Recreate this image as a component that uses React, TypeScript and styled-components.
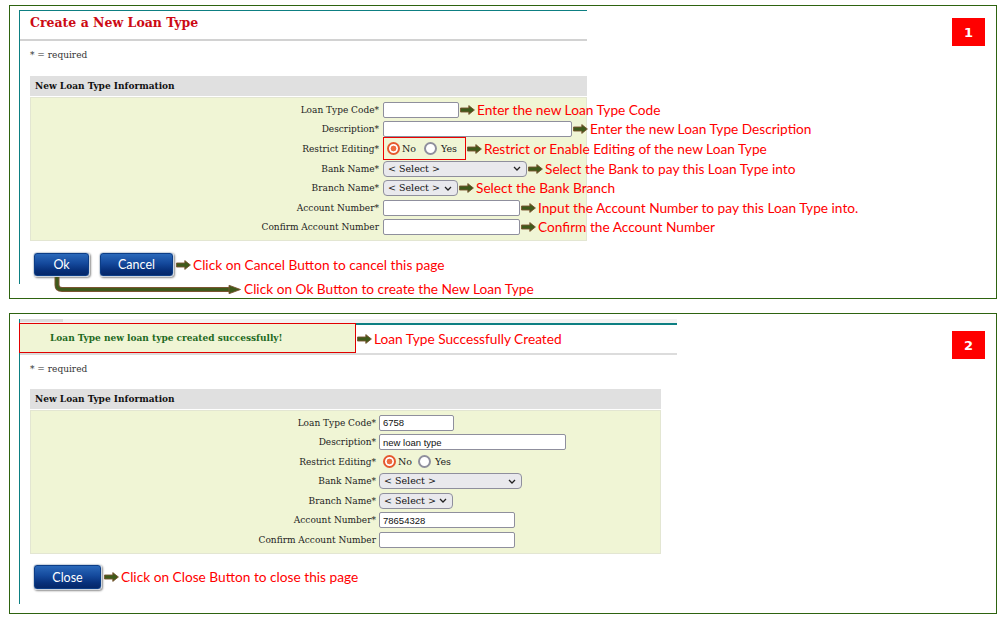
import React from "react";
import styled, { createGlobalStyle } from "styled-components";

const TEAL = "#0d7f82";
const SERIF = `"DejaVu Serif", serif`;
const NOTE_FONT = `Lato, "Open Sans", sans-serif`;

const GlobalStyle = createGlobalStyle`
  html, body { margin: 0; padding: 0; background: #ffffff; }
  body { font-family: ${SERIF}; }
  * { box-sizing: border-box; }
`;

const Page = styled.div`
  width: 1002px;
  height: 618px;
  padding-top: 5px;
  display: flex;
  flex-direction: column;
  gap: 14px;
`;

const Panel = styled.section<{ $pt: number; $pb: number; $h: number }>`
  margin-left: 9px;
  width: 988px;
  height: ${(p) => p.$h}px;
  border: 1px solid #2e6310;
  display: flex;
  justify-content: space-between;
  align-items: flex-start;
  padding: ${(p) => p.$pt}px 11px ${(p) => p.$pb}px 9px;
`;

const Badge = styled.div<{ $mt: number }>`
  margin-top: ${(p) => p.$mt}px;
  width: 33px;
  height: 28px;
  background: #ff0000;
  color: #ffffff;
  font: bold 13px "DejaVu Sans", sans-serif;
  display: flex;
  align-items: center;
  justify-content: center;
`;

const Column = styled.div<{ $w: number }>`
  width: ${(p) => p.$w}px;
  display: flex;
  flex-direction: column;
`;

const Screen = styled.div<{ $topLine: boolean; $pb: number }>`
  border-left: 1px solid ${TEAL};
  border-top: ${(p) => (p.$topLine ? `1px solid ${TEAL}` : "none")};
  padding-bottom: ${(p) => p.$pb}px;
  display: flex;
  flex-direction: column;
`;

const TitleBar = styled.div`
  height: 30px;
  border-bottom: 2px solid #d2d2d2;
  padding: 0 0 5px 10px;
  display: flex;
  align-items: center;
`;

const Title = styled.h1`
  margin: 0;
  font: bold 12.5px ${SERIF};
  color: #cc0a14;
`;

const TopBand = styled.div`
  height: 4px;
  background: #f3f3f3;
  display: flex;
`;

const Tab = styled.div`
  width: 43px;
  height: 3px;
  background: #dcdcdc;
`;

const MsgBar = styled.div`
  height: 32px;
  border-top: 2px solid ${TEAL};
  border-bottom: 2px solid #dcdcdc;
  display: flex;
  align-items: flex-start;
  white-space: nowrap;
`;

const MsgBox = styled.div`
  margin: -2px 0 0 -1px;
  width: 337px;
  height: 30px;
  border: 1px solid #e10000;
  background: #f0f5d5;
  padding-left: 30px;
  display: flex;
  align-items: center;
  font: bold 9px ${SERIF};
  color: #1f6a1f;
`;

const MsgNote = styled.div`
  height: 28px;
  display: flex;
  align-items: center;
`;

const Required = styled.div<{ $mt: number }>`
  margin-top: ${(p) => p.$mt}px;
  padding-left: 10px;
  font: 9px/12px ${SERIF};
  color: #333333;
`;

const Section = styled.div<{ $mt: number; $w: number }>`
  margin: ${(p) => p.$mt}px 0 0 10px;
  width: ${(p) => p.$w}px;
`;

const SectionHead = styled.div`
  height: 20px;
  background: #e0e0e0;
  padding-left: 5px;
  font: bold 9px/20px ${SERIF};
  color: #111111;
`;

const SectionBody = styled.div<{ $h: number }>`
  margin-top: 1px;
  height: ${(p) => p.$h}px;
  background: #f0f5d5;
  border: 1px solid #e3e6d2;
  padding-top: 2px;
  display: flex;
  flex-direction: column;
`;

const FormRow = styled.div<{ $h: number }>`
  height: ${(p) => p.$h}px;
  display: flex;
  align-items: center;
  white-space: nowrap;
`;

const Label = styled.label<{ $w: number; $gap: number }>`
  width: ${(p) => p.$w}px;
  margin-right: ${(p) => p.$gap}px;
  flex-shrink: 0;
  text-align: right;
  font: 9px ${SERIF};
  color: #222222;
`;

const TextInput = styled.input<{ $w: number }>`
  width: ${(p) => p.$w}px;
  height: 16px;
  flex-shrink: 0;
  border: 1px solid #8f8f9d;
  border-radius: 2px;
  background: #ffffff;
  padding: 0 3px;
  font: 9.5px "Liberation Sans", sans-serif;
  color: #111111;
  outline: none;
`;

const SelectBox = styled.div<{ $w: number }>`
  position: relative;
  width: ${(p) => p.$w}px;
  height: 16px;
  flex-shrink: 0;
  display: flex;
`;

const Select = styled.select`
  appearance: none;
  display: block;
  width: 100%;
  height: 16px;
  min-height: 0;
  margin: 0;
  border: 1px solid #8f8f9d;
  border-radius: 4px;
  background: #e9e9ed;
  padding: 0 0 0 4px;
  font: 9.5px/14px ${SERIF};
  color: #111111;
  outline: none;
`;

const Chevron = styled.svg`
  position: absolute;
  right: 6px;
  top: 5.5px;
  pointer-events: none;
`;

const RadioGroup = styled.div<{ $boxed: boolean }>`
  height: ${(p) => (p.$boxed ? "23px" : "16px")};
  width: ${(p) => (p.$boxed ? "83px" : "auto")};
  border: ${(p) => (p.$boxed ? "1px solid #ee0000" : "none")};
  padding-left: ${(p) => (p.$boxed ? "3px" : "4px")};
  display: flex;
  align-items: center;
  flex-shrink: 0;
`;

const Radio = styled.input`
  appearance: none;
  margin: 0;
  width: 13px;
  height: 13px;
  border-radius: 50%;
  border: 2px solid #8f8f9d;
  background: #ffffff;
  flex-shrink: 0;
  &:checked {
    border-color: #e5582f;
    background: radial-gradient(circle, #ee6b3f 0 2.6px, #ffffff 3.2px);
  }
`;

const RadioText = styled.span<{ $ml: number; $mr: number }>`
  margin-left: ${(p) => p.$ml}px;
  margin-right: ${(p) => p.$mr}px;
  font: 9.5px ${SERIF};
  color: #222222;
`;

const Note = styled.span`
  font: 13.7px/16px ${NOTE_FONT};
  color: #ff0000;
`;

const Pointer = styled.svg`
  flex-shrink: 0;
  margin: 0 2px 0 1px;
`;

const ButtonRow = styled.div<{ $mt: number }>`
  margin-top: ${(p) => p.$mt}px;
  padding-left: 13px;
  display: flex;
  align-items: center;
  gap: 9px;
  white-space: nowrap;
`;

const NoteGroup = styled.div`
  display: flex;
  align-items: center;
  margin-left: -8px;
`;

const Button = styled.button<{ $w: number; $h: number }>`
  width: ${(p) => p.$w}px;
  height: ${(p) => p.$h}px;
  border: 1px solid #cdd5df;
  border-radius: 4px;
  background: linear-gradient(to bottom, #2d6cbd 0%, #14499c 45%, #07307a 75%, #052565 100%);
  box-shadow: 1px 1px 2px rgba(0, 0, 0, 0.45), inset 0 0 0 1px #0c3d86;
  color: #ffffff;
  font: 12.5px ${NOTE_FONT};
  padding: 0;
  cursor: pointer;
`;

const HintRow = styled.div`
  margin-top: -7px;
  padding-left: 34px;
  display: flex;
  align-items: flex-start;
  white-space: nowrap;
`;

const HintText = styled(Note)`
  margin: 4px 0 0 2px;
`;

const Arrow = () => (
  <Pointer width={15} height={10} viewBox="0 0 15 10">
    <path
      d="M0.5 3 H8.8 V0.6 L14.4 5 L8.8 9.4 V7 H0.5 Z"
      fill="#3f5a1b"
      stroke="#7a5531"
      strokeWidth={0.9}
    />
  </Pointer>
);

const ChevronIcon = () => (
  <Chevron width={8} height={5} viewBox="0 0 8 5">
    <path d="M1 1 L4 4 L7 1" fill="none" stroke="#222" strokeWidth={1.3} />
  </Chevron>
);

type Field =
  | { kind: "input"; label: string; w: number; value?: string; note?: string }
  | { kind: "select"; label: string; w: number; note?: string }
  | { kind: "radio"; label: string; boxed: boolean; note?: string };

type Layout = { lw: number; gap: number; rowH: number; radio: [number, number, number] };

const FieldRow: React.FC<{ f: Field; layout: Layout; idx: number }> = ({ f, layout, idx }) => {
  let control: React.ReactNode;
  if (f.kind === "input") {
    control = <TextInput $w={f.w} type="text" readOnly value={f.value ?? ""} />;
  } else if (f.kind === "select") {
    control = (
      <SelectBox $w={f.w}>
        <Select defaultValue="">
          <option value="">&lt; Select &gt;</option>
        </Select>
        <ChevronIcon />
      </SelectBox>
    );
  } else {
    const [noGap, yesGapL, yesGapR] = layout.radio;
    control = (
      <RadioGroup $boxed={f.boxed}>
        <Radio type="radio" name={`restrict-${idx}`} defaultChecked />
        <RadioText $ml={noGap} $mr={yesGapL}>No</RadioText>
        <Radio type="radio" name={`restrict-${idx}`} />
        <RadioText $ml={yesGapR} $mr={0}>Yes</RadioText>
      </RadioGroup>
    );
  }
  return (
    <FormRow $h={layout.rowH}>
      <Label $w={layout.lw} $gap={layout.gap}>{f.label}</Label>
      {control}
      {f.note && (
        <>
          <Arrow />
          <Note>{f.note}</Note>
        </>
      )}
    </FormRow>
  );
};

const fields1: Field[] = [
  { kind: "input", label: "Loan Type Code*", w: 76, note: "Enter the new Loan Type Code" },
  { kind: "input", label: "Description*", w: 189, note: "Enter the new Loan Type Description" },
  { kind: "radio", label: "Restrict Editing*", boxed: true, note: "Restrict or Enable Editing of the new Loan Type" },
  { kind: "select", label: "Bank Name*", w: 144, note: "Select the Bank to pay this Loan Type into" },
  { kind: "select", label: "Branch Name*", w: 75, note: "Select the Bank Branch" },
  { kind: "input", label: "Account Number*", w: 137, note: "Input the Account Number to pay this Loan Type into." },
  { kind: "input", label: "Confirm Account Number", w: 137, note: "Confirm the Account Number" },
];

const fields2: Field[] = [
  { kind: "input", label: "Loan Type Code*", w: 75, value: "6758" },
  { kind: "input", label: "Description*", w: 187, value: "new loan type" },
  { kind: "radio", label: "Restrict Editing*", boxed: false },
  { kind: "select", label: "Bank Name*", w: 143 },
  { kind: "select", label: "Branch Name*", w: 74 },
  { kind: "input", label: "Account Number*", w: 136, value: "78654328" },
  { kind: "input", label: "Confirm Account Number", w: 136 },
];

const layout1: Layout = { lw: 348, gap: 4, rowH: 19.6, radio: [2, 8, 4] };
const layout2: Layout = { lw: 345, gap: 3, rowH: 19.5, radio: [2, 6, 4] };

export default function App() {
  return (
    <>
      <GlobalStyle />
      <Page>
        <Panel $pt={4} $pb={1} $h={294}>
          <Column $w={568}>
            <Screen $topLine $pb={7}>
              <TitleBar>
                <Title>Create a New Loan Type</Title>
              </TitleBar>
              <Required $mt={8}>* = required</Required>
              <Section $mt={15} $w={557}>
                <SectionHead>New Loan Type Information</SectionHead>
                <SectionBody $h={144}>
                  {fields1.map((f, i) => (
                    <FieldRow key={f.label} f={f} layout={layout1} idx={i} />
                  ))}
                </SectionBody>
              </Section>
              <ButtonRow $mt={11}>
                <Button $w={57} $h={25}>Ok</Button>
                <Button $w={75} $h={25}>Cancel</Button>
                <NoteGroup>
                  <Arrow />
                  <Note>Click on Cancel Button to cancel this page</Note>
                </NoteGroup>
              </ButtonRow>
            </Screen>
            <HintRow>
              <svg width={189} height={20} viewBox="0 0 189 20">
                <path
                  d="M4 0 V8 Q4 12.5 9 12.5 H178"
                  fill="none"
                  stroke="#7a5531"
                  strokeWidth={5}
                />
                <path
                  d="M4 0 V8 Q4 12.5 9 12.5 H178"
                  fill="none"
                  stroke="#3f5a1b"
                  strokeWidth={3}
                />
                <path d="M176 8.3 L187.5 12.5 L176 16.7 Z" fill="#3f5a1b" stroke="#7a5531" strokeWidth={0.9} />
              </svg>
              <HintText>Click on Ok Button to create the New Loan Type</HintText>
            </HintRow>
          </Column>
          <Badge $mt={8}>1</Badge>
        </Panel>

        <Panel $pt={5} $pb={9} $h={301}>
          <Column $w={658}>
            <Screen $topLine={false} $pb={14}>
              <TopBand>
                <Tab />
              </TopBand>
              <MsgBar>
                <MsgBox>Loan Type new loan type created successfully!</MsgBox>
                <MsgNote>
                  <Arrow />
                  <Note>Loan Type Successfully Created</Note>
                </MsgNote>
              </MsgBar>
              <Required $mt={8}>* = required</Required>
              <Section $mt={14} $w={631}>
                <SectionHead>New Loan Type Information</SectionHead>
                <SectionBody $h={144}>
                  {fields2.map((f, i) => (
                    <FieldRow key={f.label} f={f} layout={layout2} idx={i + 10} />
                  ))}
                </SectionBody>
              </Section>
              <ButtonRow $mt={10}>
                <Button $w={69} $h={26}>Close</Button>
                <NoteGroup>
                  <Arrow />
                  <Note>Click on Close Button to close this page</Note>
                </NoteGroup>
              </ButtonRow>
            </Screen>
          </Column>
          <Badge $mt={12}>2</Badge>
        </Panel>
      </Page>
    </>
  );
}
